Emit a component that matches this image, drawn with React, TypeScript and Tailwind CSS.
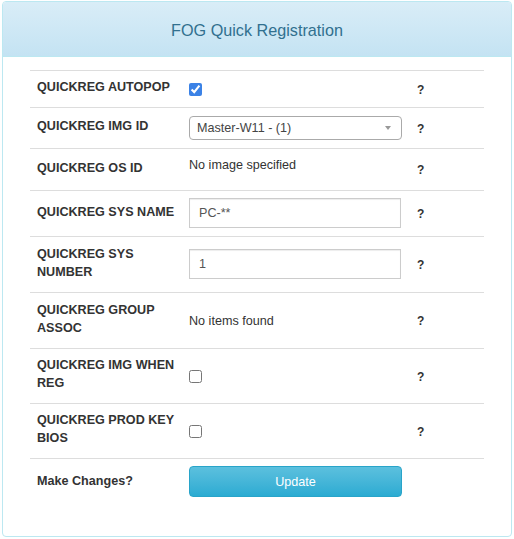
import React from "react";

const Q = () => (
  <div className="w-[75px] pl-[7px] font-bold text-[12px] text-[#333] pt-[1px]">?</div>
);

const Label = ({ children }: { children: React.ReactNode }) => (
  <div className="mb-[4px] w-[151px] shrink-0 pl-[7px] pr-[4px] font-bold text-[12.6px] leading-[18px] text-[#333]">
    {children}
  </div>
);

const Row = ({
  h,
  label,
  children,
}: {
  h: string;
  label: React.ReactNode;
  children?: React.ReactNode;
}) => (
  <div className={`flex items-center border-t border-[#dddddd] ${h}`}>
    <Label>{label}</Label>
    <div className="w-[229px] shrink-0 pl-[8px] text-[12.6px] text-[#333]">{children}</div>
    <Q />
  </div>
);

export default function App() {
  return (
    <div className="min-h-[539px] w-[514px] bg-white pt-[1px] font-['Liberation_Sans',Arial,sans-serif]">
      <div className="ml-[2px] w-[510px] rounded-[4px] border border-[#bce8f1] bg-white">
        <div className="flex h-[55px] items-center justify-center rounded-t-[3px] border-b border-[#bce8f1] bg-linear-to-b from-[#d9edf7] to-[#c4e3f3] pt-[2px]">
          <span className="text-[16.2px] text-[#31708f]">FOG Quick Registration</span>
        </div>
        <div className="px-[27px] pt-[13px] pb-[31px]">
          <Row h="h-[37px]" label="QUICKREG AUTOPOP">
            <input type="checkbox" defaultChecked className="m-0 block h-[13px] w-[13px] accent-[#3b82e6]" />
          </Row>
          <Row h="h-[41px]" label="QUICKREG IMG ID">
            <div className="relative w-[213px]">
              <select className="block h-[24px] w-[213px] appearance-none rounded-[4px] border border-[#aaaaaa] bg-white pl-[7px] text-[12.6px] text-[#444] outline-none">
                <option>Master-W11 - (1)</option>
              </select>
              <span className="pointer-events-none absolute right-[11px] top-[10px] h-0 w-0 border-x-[3px] border-t-[4px] border-x-transparent border-t-[#999]" />
            </div>
          </Row>
          <Row h="h-[42px]" label="QUICKREG OS ID">
            <div className="mb-[8px]">No image specified</div>
          </Row>
          <Row h="h-[46px]" label="QUICKREG SYS NAME">
            <input
              defaultValue="PC-**"
              className="mb-[2px] block h-[30px] w-[212px] border border-[#cccccc] bg-white px-[9px] text-[12.6px] text-[#555] outline-none shadow-[inset_0_1px_1px_rgba(0,0,0,0.075)]"
            />
          </Row>
          <Row h="h-[56px]" label="QUICKREG SYS NUMBER">
            <input
              defaultValue="1"
              className="mb-[2px] block h-[30px] w-[212px] border border-[#cccccc] bg-white px-[9px] text-[12.6px] text-[#555] outline-none shadow-[inset_0_1px_1px_rgba(0,0,0,0.075)]"
            />
          </Row>
          <Row h="h-[56px]" label="QUICKREG GROUP ASSOC">
            <div className="mt-[1px]">No items found</div>
          </Row>
          <Row h="h-[55px]" label="QUICKREG IMG WHEN REG">
            <input type="checkbox" className="m-0 block h-[13px] w-[13px]" />
          </Row>
          <Row h="h-[55px]" label="QUICKREG PROD KEY BIOS">
            <input type="checkbox" className="m-0 block h-[13px] w-[13px]" />
          </Row>
          <div className="flex h-[47px] items-start border-t border-[#dddddd] pt-[7px]">
            <div className="w-[151px] shrink-0 pl-[7px] pt-[6px] font-bold text-[12.6px] leading-[18px] text-[#333]">
              Make Changes?
            </div>
            <div className="w-[229px] shrink-0 pl-[8px]">
              <button className="block h-[31px] w-[213px] rounded-[4px] border border-[#28a4c9] bg-linear-to-b from-[#5bc0de] to-[#2aabd2] pt-[1px] text-[12.6px] text-white">
                Update
              </button>
            </div>
          </div>
        </div>
      </div>
    </div>
  );
}
